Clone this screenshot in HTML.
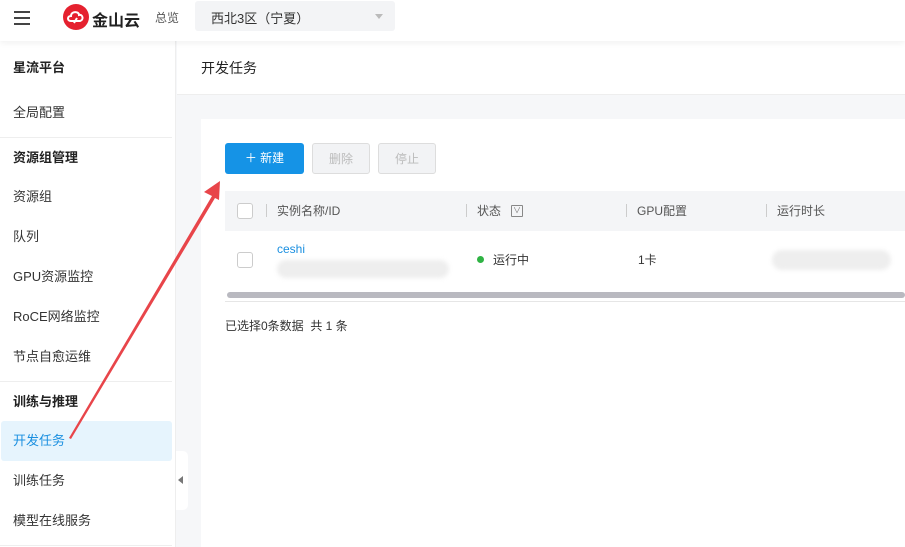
<!DOCTYPE html>
<html><head><meta charset="utf-8"><style>
*{margin:0;padding:0;box-sizing:border-box}
body{width:905px;height:547px;overflow:hidden;background:#f6f7f9;font-family:"Liberation Sans","Noto Sans CJK SC",sans-serif;font-size:13px;color:#333;position:relative}
.abs{position:absolute}
.top{left:0;top:0;width:905px;height:41px;background:#fff;box-shadow:0 2px 6px rgba(0,0,0,.06);z-index:2}
.side{left:0;top:41px;width:176px;height:506px;background:#fff;border-right:1px solid #eee}
.item{position:absolute;left:13px;font-size:13px;color:#333}
.b{font-weight:bold;color:#222}
.hr{position:absolute;left:0;width:172px;height:1px;background:#eee}
.hdr{left:177px;top:41px;width:728px;height:54px;background:#fff;border-bottom:1px solid #eee}
.card{left:201px;top:119px;width:704px;height:428px;background:#fff}
.btn{position:absolute;top:24px;height:31px;border-radius:3px;font-size:12px;line-height:31px;text-align:center}
</style></head><body>
<div class="abs top">
 <div class="abs" style="left:14px;top:11px;width:16px;height:2px;background:#444;box-shadow:0 6px 0 #444,0 12px 0 #444"></div>
 <div class="abs" style="left:63px;top:4px;width:26px;height:26px;border-radius:50%;background:#e5212f"></div>
 <svg class="abs" style="left:66px;top:9px" width="20" height="16" viewBox="0 0 20 16"><path d="M5 12 C1 12 1 7 5 7 C5 2 13 2 13 6 C17 5 18 11 14 12 Z" fill="none" stroke="#fff" stroke-width="2"/><path d="M8 14 L11 9" stroke="#fff" stroke-width="2"/></svg>
 <div class="abs" style="left:92px;top:7px;font-size:16px;font-weight:bold;color:#222">金山云</div>
 <div class="abs" style="left:155px;top:9px;font-size:12px;color:#555">总览</div>
 <div class="abs" style="left:195px;top:1px;width:200px;height:30px;background:#f3f4f6;border-radius:3px;font-size:13px;color:#333;padding:7px 0 0 16px">西北3区（宁夏）</div>
 <div class="abs" style="left:375px;top:14px;border:4px solid transparent;border-top:5px solid #bbb"></div>
</div>
<div class="abs side">
 <div class="item b" style="top:16px">星流平台</div>
 <div class="item" style="top:61px">全局配置</div>
 <div class="hr" style="top:96px"></div>
 <div class="item b" style="top:106px">资源组管理</div>
 <div class="item" style="top:145px">资源组</div>
 <div class="item" style="top:185px">队列</div>
 <div class="item" style="top:225px">GPU资源监控</div>
 <div class="item" style="top:265px">RoCE网络监控</div>
 <div class="item" style="top:305px">节点自愈运维</div>
 <div class="hr" style="top:340px"></div>
 <div class="item b" style="top:350px">训练与推理</div>
 <div class="abs" style="left:1px;top:380px;width:171px;height:40px;background:#e6f4fd;border-radius:3px"></div>
 <div class="item" style="top:389px;color:#1a8fe0">开发任务</div>
 <div class="item" style="top:429px">训练任务</div>
 <div class="item" style="top:469px">模型在线服务</div>
 <div class="hr" style="top:504px"></div>
</div>
<div class="abs" style="left:176px;top:451px;width:12px;height:59px;background:#fff;border-radius:0 5px 5px 0"></div>
<div class="abs" style="left:178px;top:476px;border:4px solid transparent;border-right:5px solid #777;border-left:0"></div>
<div class="abs hdr"><div class="abs" style="left:24px;top:17px;font-size:14px;color:#222">开发任务</div></div>
<div class="abs card">
 <div class="btn" style="left:24px;width:79px;background:#1593e6;color:#fff">＋ 新建</div>
 <div class="btn" style="left:111px;width:58px;background:#f2f3f5;border:1px solid #ddd;color:#bbb">删除</div>
 <div class="btn" style="left:177px;width:58px;background:#f2f3f5;border:1px solid #ddd;color:#bbb">停止</div>
 <div class="abs" style="left:24px;top:72px;width:680px;height:40px;background:#f4f5f7"></div>
 <div class="abs" style="left:36px;top:84px;width:16px;height:16px;border:1px solid #ccc;border-radius:3px;background:#fff"></div>
 <div class="abs" style="left:65px;top:85px;width:1px;height:13px;background:#ccc"></div>
 <div class="abs" style="left:76px;top:83px;font-size:12px;color:#555">实例名称/ID</div>
 <div class="abs" style="left:265px;top:85px;width:1px;height:13px;background:#ccc"></div>
 <div class="abs" style="left:276px;top:83px;font-size:12px;color:#555">状态</div>
 <div class="abs" style="left:310px;top:86px;width:12px;height:12px;border:1px solid #888;border-radius:1px;font-size:8px;line-height:9px;text-align:center;color:#777">∨</div>
 <div class="abs" style="left:425px;top:85px;width:1px;height:13px;background:#ccc"></div>
 <div class="abs" style="left:436px;top:83px;font-size:12px;color:#555">GPU配置</div>
 <div class="abs" style="left:565px;top:85px;width:1px;height:13px;background:#ccc"></div>
 <div class="abs" style="left:576px;top:83px;font-size:12px;color:#555">运行时长</div>
 <div class="abs" style="left:36px;top:133px;width:16px;height:16px;border:1px solid #ccc;border-radius:3px"></div>
 <div class="abs" style="left:76px;top:123px;font-size:12px;color:#1a8fe0">ceshi</div>
 <div class="abs" style="left:76px;top:141px;width:172px;height:18px;background:#eee;border-radius:9px;filter:blur(2px)"></div>
 <div class="abs" style="left:276px;top:137px;width:7px;height:7px;border-radius:50%;background:#2fb344"></div>
 <div class="abs" style="left:292px;top:132px;font-size:12px">运行中</div>
 <div class="abs" style="left:437px;top:132px;font-size:12px">1卡</div>
 <div class="abs" style="left:571px;top:131px;width:119px;height:20px;background:#eee;border-radius:10px;filter:blur(2px)"></div>
 <div class="abs" style="left:26px;top:173px;width:678px;height:6px;background:#b9b9c0;border-radius:3px"></div>
 <div class="abs" style="left:24px;top:182px;width:680px;height:1px;background:#e6e6e6"></div>
 <div class="abs" style="left:24px;top:198px;font-size:12px">已选择0条数据&nbsp; 共 1 条</div>
</div>
<svg class="abs" style="left:0;top:0" width="905" height="547"><path d="M69 438 L212 196 L204 192 L220 181 L219 200 L215 198 L71 439 Z" fill="#e8454a"/></svg>
</body></html>
